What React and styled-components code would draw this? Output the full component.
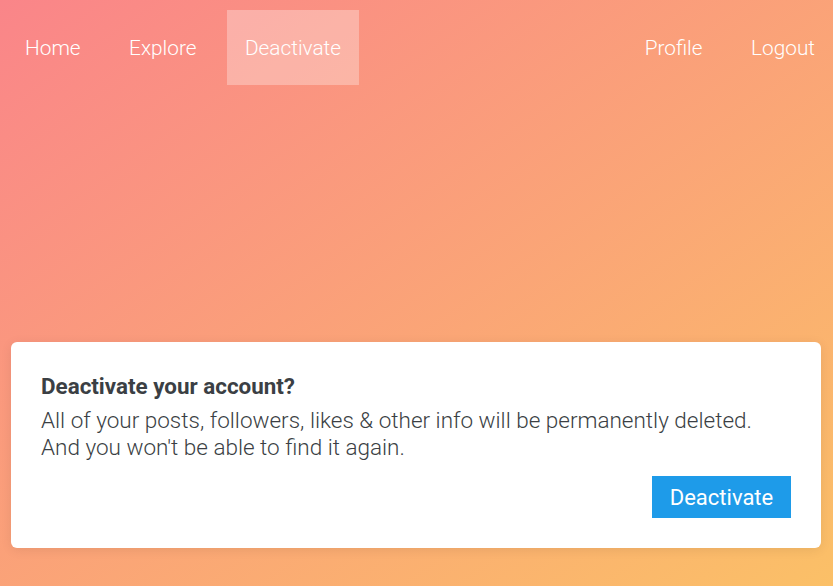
import React from 'react';
import styled, { createGlobalStyle } from 'styled-components';

const GlobalStyle = createGlobalStyle`
  * {
    box-sizing: border-box;
  }

  html,
  body {
    margin: 0;
    padding: 0;
    height: 100%;
  }

  body {
    font-family: Roboto, 'Liberation Sans', sans-serif;
  }
`;

const leftLinks = [
  { id: 1, label: 'Home' },
  { id: 2, label: 'Explore' },
  { id: 3, label: 'Deactivate', active: true },
];

const rightLinks = [
  { id: 4, label: 'Profile' },
  { id: 5, label: 'Logout' },
];

const Page = styled.div`
  min-height: 100vh;
  display: flex;
  flex-direction: column;
  background: linear-gradient(to bottom right, #fa8589, #fbc067);
`;

// NAVBAR
const Nav = styled.nav`
  display: flex;
  justify-content: space-between;
  align-items: center;
  padding: 10px 0 0 7px;
`;

const NavGroup = styled.div`
  display: flex;
  gap: 12.5px;
`;

const NavLink = styled.a`
  height: 75px;
  padding: 0 18px;
  display: flex;
  align-items: center;
  font-size: 20.8px;
  font-weight: 300;
  color: #fff;
  text-decoration: none;
  background-color: ${({ $active }) =>
    $active ? 'rgba(255, 255, 255, 0.3)' : 'transparent'};
`;

const Spacer = styled.div`
  flex: 1;
`;

// CARD
const Card = styled.div`
  margin: 0 12px 38px 11px;
  background-color: #fff;
  border-radius: 6px;
  box-shadow: 0 2px 12px rgba(0, 0, 0, 0.08);
  padding: 30px 30px 30px;
  color: #3b3f44;
`;

const Title = styled.h3`
  margin: 0 0 7px;
  font-size: 22.4px;
  font-weight: 700;
  line-height: 28px;
`;

const Message = styled.p`
  margin: 0;
  font-size: 22.5px;
  font-weight: 300;
  line-height: 27px;
`;

const Actions = styled.div`
  display: flex;
  justify-content: flex-end;
  margin-top: 15px;
`;

const DangerButton = styled.button`
  width: 139px;
  height: 42px;
  border: none;
  border-radius: 0;
  background-color: #1e9be9;
  color: #fff;
  font-family: Roboto, 'Liberation Sans', sans-serif;
  font-size: 22px;
  font-weight: 400;
  cursor: pointer;
`;

const App = () => {
  return (
    <Page>
      <GlobalStyle />
      <Nav>
        <NavGroup>
          {leftLinks.map((item) => (
            <NavLink key={item.id} href="#" $active={item.active}>
              {item.label}
            </NavLink>
          ))}
        </NavGroup>
        <NavGroup>
          {rightLinks.map((item) => (
            <NavLink key={item.id} href="#">
              {item.label}
            </NavLink>
          ))}
        </NavGroup>
      </Nav>
      <Spacer />
      <Card>
        <Title>Deactivate your account?</Title>
        <Message>
          All of your posts, followers, likes &amp; other info will be
          permanently deleted.
          <br />
          And you won't be able to find it again.
        </Message>
        <Actions>
          <DangerButton>Deactivate</DangerButton>
        </Actions>
      </Card>
    </Page>
  );
};

export default App;
